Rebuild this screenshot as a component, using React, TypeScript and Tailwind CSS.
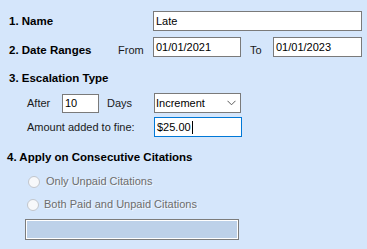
import React from "react";

const Field = ({ w, h = 20, text, focused = false, children }: { w: string; h?: number; text?: string; focused?: boolean; children?: React.ReactNode }) => (
  <div
    className={`${w} ${h === 19 ? "h-[19px]" : "h-[20px]"} flex items-center bg-white border ${focused ? "border-[#0078d7]" : "border-[#7a7a7a]"} pl-[2px] text-[11px] leading-[13px] text-black shrink-0`}
  >
    {text}
    {children}
  </div>
);

export default function App() {
  return (
    <div
      className="w-[367px] h-[249px] bg-[#d5e6fb] flex flex-col text-[11px] leading-[13px] text-[#1a1a1a] overflow-hidden"
      style={{ fontFamily: '"Liberation Sans", Arial, sans-serif' }}
    >
      {/* Row 1 */}
      <div className="flex items-center h-[20px] mt-[11px]">
        <div className="w-[153px] pl-[9px] font-bold text-[11.5px] text-black">1. Name</div>
        <Field w="w-[209px]" text="Late" />
      </div>

      {/* Row 2 */}
      <div className="flex items-start h-[20px] mt-[6px]">
        <div className="w-[118px] pl-[9px] pt-[7px] font-bold text-[11.5px] text-black">2. Date Ranges</div>
        <div className="w-[35px] pt-[7px]">From</div>
        <Field w="w-[88px]" text="01/01/2021" />
        <div className="w-[32px] pl-[9px] pt-[7px]">To</div>
        <Field w="w-[89px]" text="01/01/2023" />
      </div>

      {/* Heading 3 */}
      <div className="mt-[15px] pl-[9px] font-bold text-[11.5px] text-black">3. Escalation Type</div>

      {/* Row 3a */}
      <div className="flex items-center h-[20px] mt-[8px] pl-[27px]">
        <div className="w-[35px]">After</div>
        <div className="mt-[1px]">
          <Field w="w-[37px]" h={19} text="10" />
        </div>
        <div className="w-[55px] pl-[8px]">Days</div>
        <div className="w-[87px] h-[20px] flex items-center justify-between bg-white border border-[#7a7a7a] pl-[1px] pr-[4px] text-black">
          <span>Increment</span>
          <svg width="9" height="6" viewBox="0 0 9 6" className="shrink-0">
            <path d="M0.5 0.8 L4.5 4.8 L8.5 0.8" fill="none" stroke="#5a5a5a" strokeWidth="1" />
          </svg>
        </div>
      </div>

      {/* Row 3b */}
      <div className="flex items-center h-[20px] mt-[4px] pl-[27px]">
        <div className="w-[127px]">Amount added to fine:</div>
        <Field w="w-[88px]" focused text="$25.00">
          <span className="inline-block w-[1px] h-[13px] bg-black ml-[1px]" />
        </Field>
      </div>

      {/* Heading 4 */}
      <div className="mt-[14px] pl-[7px] font-bold text-[11.5px] text-black">4. Apply on Consecutive Citations</div>

      {/* Radio 1 */}
      <div className="flex items-center h-[13px] mt-[11px] pl-[28px] gap-[6px] text-[#6d6d6d] [text-shadow:1px_1px_0_rgba(255,255,255,0.7)]">
        <div className="w-[12px] h-[12px] rounded-full border border-[#c2c6cc] bg-[#f7f8fa] shrink-0" />
        <span>Only Unpaid Citations</span>
      </div>

      {/* Radio 2 */}
      <div className="flex items-center h-[13px] mt-[10px] pl-[27px] gap-[5px] text-[#6d6d6d] [text-shadow:1px_1px_0_rgba(255,255,255,0.7)]">
        <div className="w-[12px] h-[12px] rounded-full border border-[#c2c6cc] bg-[#f7f8fa] shrink-0" />
        <span>Both Paid and Unpaid Citations</span>
      </div>

      {/* Bar */}
      <div className="ml-[25px] mt-[8px] w-[214px] h-[21px] border border-[#7c7c7c] bg-[#bdd1e9] shadow-[inset_0_0_0_1px_#ffffff]" />
    </div>
  );
}
